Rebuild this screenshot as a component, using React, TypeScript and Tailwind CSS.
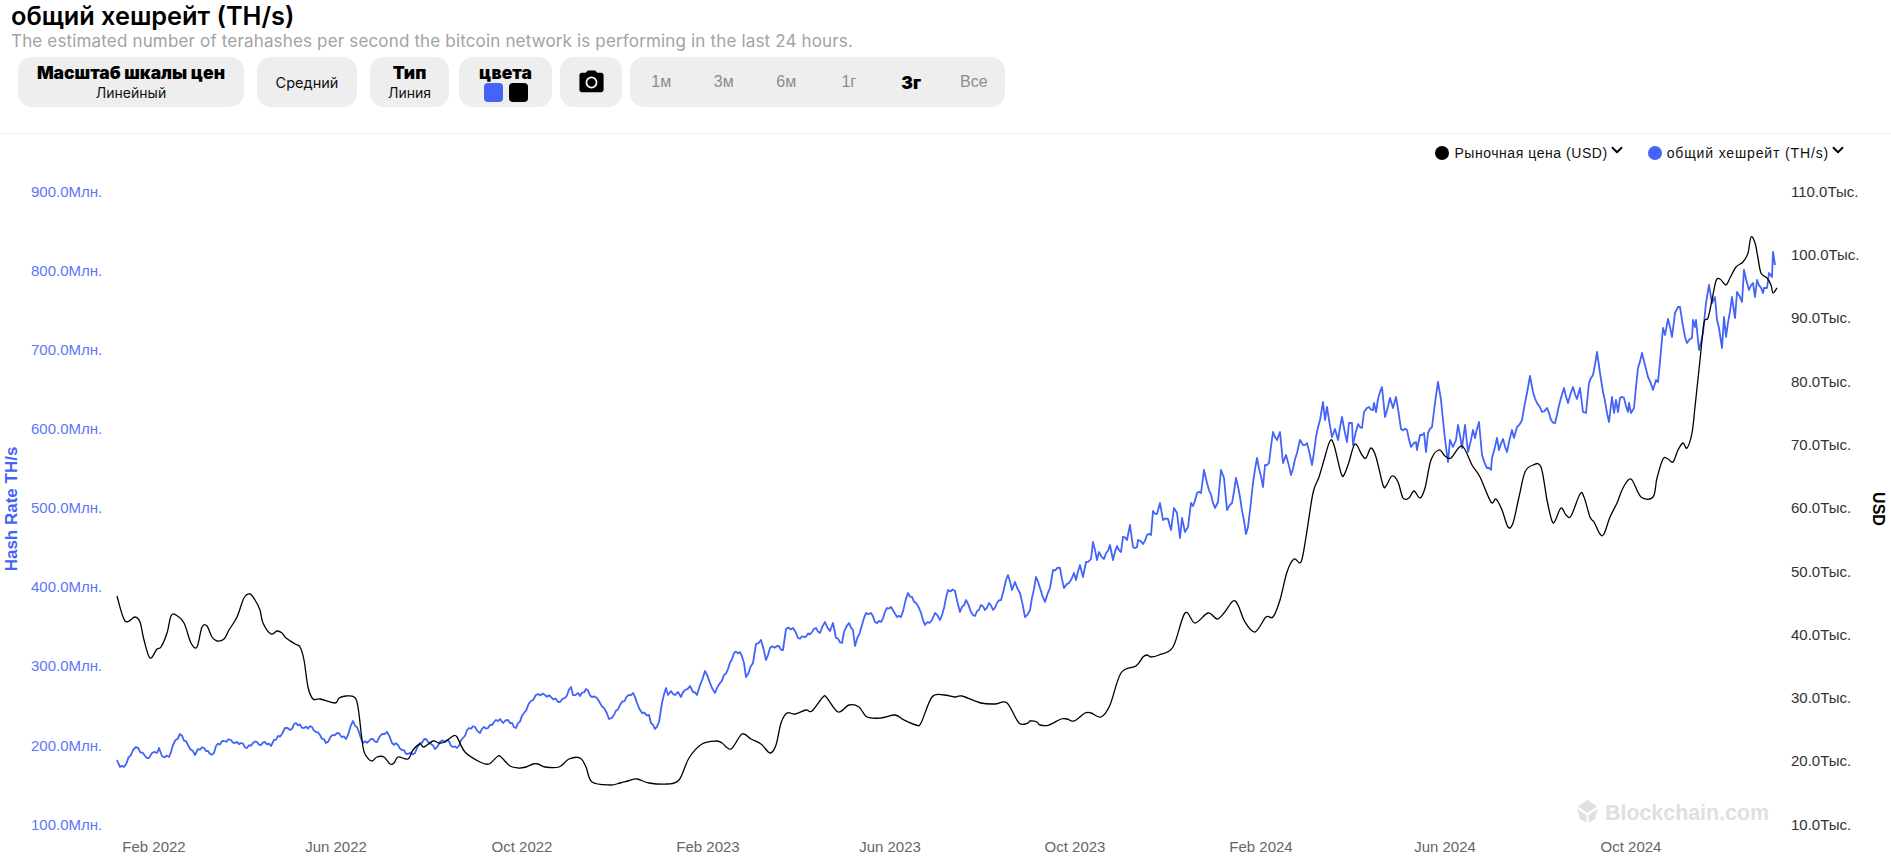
import { ChevronDown } from "lucide-react";

const priceLine =
  "117,596 125,621 135,617 140,622 144,640 150,658 157,649 161,647 167,633 171,616 176,615 184,623 191,643 197,647 202,627 207,626 212,637 217,641 224,639 229,630 237,617 244,598 250,594 255,600 260,610 263,623 271,634 277,631 282,633 286,638 295,644 300,647 304,660 308,687 313,699 320,699 335,703 339,698 346,696 354,697 358,707 363,747 367,757 372,761 377,757 384,757 390,764 394,763 398,757 408,759 413,750 420,744 424,747 433,741 439,743 445,742 453,736 457,737 465,752 480,762 489,764 498,756 502,758 510,766 518,768 526,767 533,764 538,764 545,767 559,767 569,759 580,758 586,767 592,782 610,785 620,783 628,781 637,779 649,783 667,784 679,780 689,758 702,744 716,741 722,743 731,749 742,734 751,739 761,744 770,753 776,745 781,723 787,713 795,714 806,710 812,711 823,697 827,698 838,712 849,705 859,707 867,717 881,718 895,715 904,720 916,725 921,723 932,697 944,695 955,697 962,696 981,703 995,704 1007,703 1019,723 1028,723 1030,721 1037,722 1040,725 1049,725 1061,719 1067,719 1074,721 1085,713 1091,713 1101,717 1110,705 1121,673 1136,666 1143,657 1147,655 1151,657 1159,655 1173,647 1185,613 1195,623 1208,613 1217,619 1224,613 1233,601 1238,605 1245,622 1255,632 1266,617 1273,617 1280,600 1287,572 1294,559 1301,562 1306,537 1313,493 1319,477 1324,460 1330,441 1334,445 1341,473 1344,475 1349,462 1355,444 1362,455 1366,458 1371,448 1376,457 1383,485 1386,486 1392,476 1398,482 1403,498 1409,498 1414,491 1420,498 1425,488 1431,460 1439,450 1445,456 1451,458 1462,446 1472,465 1480,477 1491,502 1496,499 1502,510 1508,527 1513,523 1519,497 1525,472 1533,465 1541,467 1547,500 1552,521 1555,521 1561,508 1566,515 1571,516 1580,494 1584,497 1590,517 1594,522 1600,534 1604,534 1610,517 1617,503 1623,488 1631,479 1641,497 1653,497 1657,478 1663,459 1668,459 1673,462 1678,450 1683,443 1687,448 1692,433 1695,407 1700,360 1704,323 1708,318 1712,300 1716,281 1720,279 1726,285 1730,278 1736,267 1743,262 1748,253 1751,237 1755,243 1758,258 1761,273 1767,278 1771,285 1773,293 1777,288";

const hashLine =
  "117,760 120,767 124,767 133,750 136,747 145,756 149,758 152,753 157,753 159,748 162,756 169,757 173,745 180,734 188,745 195,755 198,749 204,748 210,754 214,753 216,746 224,741 231,740 235,743 241,743 247,748 253,743 257,742 261,745 265,742 271,746 274,740 282,734 285,728 290,730 296,723 304,728 312,727 316,732 320,735 326,743 333,735 337,733 346,739 353,721 359,732 363,743 369,741 373,739 377,742 382,734 387,732 392,743 398,745 402,750 408,754 415,753 420,743 426,739 431,744 435,749 440,742 447,740 453,747 457,748 463,738 469,728 475,727 480,733 484,727 488,728 494,722 500,719 503,723 508,720 516,728 524,713 531,701 538,694 545,695 551,697 560,702 565,698 571,687 573,695 578,693 580,696 586,689 592,697 597,698 600,703 604,708 609,719 614,715 620,705 629,695 633,693 637,703 642,713 649,715 651,723 655,729 659,722 662,703 666,688 668,695 671,691 675,695 678,692 681,697 685,690 690,686 693,692 697,695 700,685 705,671 710,683 715,693 720,683 728,669 734,653 740,652 744,663 746,677 753,663 756,644 761,640 766,660 770,648 777,646 783,650 786,629 793,628 798,638 804,637 812,632 816,628 820,633 825,622 830,631 833,623 836,638 842,643 844,632 849,623 853,630 855,646 862,625 866,613 871,613 875,622 881,622 887,608 891,607 894,612 897,617 901,617 908,593 916,603 921,613 925,625 932,620 935,613 940,620 944,608 948,590 955,591 960,612 966,600 971,612 975,616 981,605 985,610 989,603 993,610 997,603 1001,600 1006,580 1008,575 1012,590 1015,582 1020,593 1025,617 1030,610 1036,577 1040,588 1045,602 1050,588 1053,570 1060,568 1064,588 1069,583 1074,573 1076,580 1080,565 1083,577 1086,562 1091,559 1093,542 1097,560 1099,552 1104,559 1110,545 1113,560 1117,546 1121,552 1123,537 1127,540 1130,525 1133,547 1137,547 1138,540 1143,544 1147,535 1151,535 1153,511 1157,514 1160,503 1163,520 1168,519 1171,530 1174,508 1177,513 1180,538 1182,518 1185,532 1188,527 1191,503 1193,506 1197,493 1201,493 1204,470 1207,483 1215,508 1218,502 1221,470 1224,478 1227,510 1232,503 1236,478 1240,497 1246,534 1248,527 1253,483 1257,458 1263,487 1265,465 1269,463 1273,432 1277,440 1280,432 1283,463 1286,455 1291,475 1297,453 1300,440 1303,445 1307,443 1312,465 1316,437 1320,420 1323,402 1325,420 1327,407 1332,437 1335,429 1338,440 1342,417 1347,442 1349,423 1352,423 1353,445 1358,424 1362,428 1364,412 1369,407 1373,410 1374,403 1376,412 1378,399 1382,387 1385,417 1390,398 1393,408 1396,397 1401,429 1407,430 1411,447 1416,442 1417,450 1420,435 1424,433 1426,452 1428,433 1432,427 1435,403 1438,382 1441,400 1444,430 1448,462 1450,440 1453,447 1456,440 1458,425 1462,448 1465,425 1468,452 1473,430 1475,438 1479,422 1482,455 1487,468 1491,470 1492,458 1497,438 1499,450 1503,439 1507,452 1512,430 1514,438 1517,427 1522,420 1527,393 1530,376 1533,392 1537,403 1542,412 1547,408 1551,420 1555,423 1557,415 1561,398 1564,388 1568,403 1573,387 1577,399 1580,388 1583,412 1586,413 1589,383 1593,375 1597,352 1600,373 1603,392 1609,422 1612,397 1614,413 1616,400 1618,412 1620,398 1624,398 1628,412 1629,403 1631,413 1634,408 1638,368 1642,353 1645,365 1648,377 1653,390 1656,380 1658,382 1663,328 1665,335 1668,319 1672,337 1675,313 1678,307 1680,307 1685,337 1687,343 1692,338 1693,320 1695,327 1696,320 1699,350 1703,333 1706,303 1709,285 1712,303 1715,297 1717,320 1719,328 1722,348 1724,317 1726,337 1732,297 1735,318 1737,292 1742,302 1744,270 1749,290 1753,283 1755,297 1757,280 1763,293 1764,288 1767,288 1769,273 1772,277 1773,252 1775,265";

const parsePoints = (line: string) =>
  line.split(" ").map((p) => p.split(",").map(Number) as [number, number]);

// catmull-rom through the traced points, the price line is smooth in the original
function smoothPath(line: string) {
  const pts = parsePoints(line);
  let d = `M${pts[0][0]} ${pts[0][1]}`;
  for (let i = 0; i < pts.length - 1; i++) {
    const p0 = pts[Math.max(i - 1, 0)];
    const p1 = pts[i];
    const p2 = pts[i + 1];
    const p3 = pts[Math.min(i + 2, pts.length - 1)];
    const c1x = p1[0] + (p2[0] - p0[0]) / 6;
    const c1y = p1[1] + (p2[1] - p0[1]) / 6;
    const c2x = p2[0] - (p3[0] - p1[0]) / 6;
    const c2y = p2[1] - (p3[1] - p1[1]) / 6;
    d += ` C${c1x.toFixed(1)} ${c1y.toFixed(1)} ${c2x.toFixed(1)} ${c2y.toFixed(1)} ${p2[0]} ${p2[1]}`;
  }
  return d;
}

// the hash rate line is daily data, fill the long segments with small spikes
function dailyPoints(line: string) {
  const pts = parsePoints(line);
  const out: string[] = [];
  let flip = 1;
  pts.forEach((p, i) => {
    out.push(`${p[0]},${p[1]}`);
    const next = pts[i + 1];
    if (!next) return;
    const steps = Math.floor((next[0] - p[0]) / 2);
    for (let s = 1; s < steps; s++) {
      const t = s / steps;
      flip = -flip;
      out.push(`${p[0] + (next[0] - p[0]) * t},${p[1] + (next[1] - p[1]) * t + flip * 1.1}`);
    }
  });
  return out.join(" ");
}

const leftTicks = [
  ["900.0Млн.", 192],
  ["800.0Млн.", 271],
  ["700.0Млн.", 350],
  ["600.0Млн.", 429],
  ["500.0Млн.", 508],
  ["400.0Млн.", 587],
  ["300.0Млн.", 666],
  ["200.0Млн.", 746],
  ["100.0Млн.", 825],
] as const;

const rightTicks = [
  ["110.0Тыс.", 192],
  ["100.0Тыс.", 255],
  ["90.0Тыс.", 318],
  ["80.0Тыс.", 382],
  ["70.0Тыс.", 445],
  ["60.0Тыс.", 508],
  ["50.0Тыс.", 572],
  ["40.0Тыс.", 635],
  ["30.0Тыс.", 698],
  ["20.0Тыс.", 761],
  ["10.0Тыс.", 825],
] as const;

const dateTicks = [
  ["Feb 2022", 154],
  ["Jun 2022", 336],
  ["Oct 2022", 522],
  ["Feb 2023", 708],
  ["Jun 2023", 890],
  ["Oct 2023", 1075],
  ["Feb 2024", 1261],
  ["Jun 2024", 1445],
  ["Oct 2024", 1631],
] as const;

const ranges = ["1м", "3м", "6м", "1г", "3г", "Все"];

function ControlTitle({ children }: { children: string }) {
  return <div className="text-[17.5px] leading-[20px] font-black text-black">{children}</div>;
}

function LegendItem({ color, label, spacing }: { color: string; label: string; spacing: string }) {
  return (
    <div className="flex items-center">
      <span className={`mr-[5px] h-[14px] w-[14px] rounded-full ${color}`} />
      <span className={`text-[14px] leading-[20px] text-[#111] ${spacing}`}>{label}</span>
      <ChevronDown className="mb-[6px] h-[18px] w-[18px]" strokeWidth={2.5} color="#000" />
    </div>
  );
}

function Chart() {
  return (
    <svg
      viewBox="0 172 1891 690"
      width={1891}
      height={690}
      className="block font-['Liberation_Sans',sans-serif] text-[15px]"
    >
      {leftTicks.map(([label, y]) => (
        <text key={label} x={31} y={y + 5} fill="#5c76f7">
          {label}
        </text>
      ))}
      {rightTicks.map(([label, y]) => (
        <text key={label} x={1791} y={y + 5} fill="#333">
          {label}
        </text>
      ))}
      {dateTicks.map(([label, x]) => (
        <text key={label} x={x} y={852} fill="#666" textAnchor="middle">
          {label}
        </text>
      ))}
      <text
        transform="translate(17 509) rotate(-90)"
        textAnchor="middle"
        fill="#4364f7"
        fontSize={17}
        fontWeight={700}
      >
        Hash Rate TH/s
      </text>
      <text
        transform="translate(1873 509) rotate(90)"
        textAnchor="middle"
        fill="#000"
        fontSize={16}
        fontWeight={700}
      >
        USD
      </text>

      {/* watermark */}
      <g fill="#e0e0e0">
        <polygon points="1587.5,800 1597,806.5 1587.5,813 1578,806.5" />
        <polygon points="1577,808.5 1586.5,815 1586.5,822.5 1580,819" />
        <polygon points="1598,808.5 1588.5,815 1588.5,822.5 1595,819" />
        <text x={1605} y={820} fontSize={21.4} fontWeight={700}>
          Blockchain.com
        </text>
      </g>

      <polyline
        points={dailyPoints(hashLine)}
        fill="none"
        stroke="#4364f7"
        strokeWidth={1.8}
        strokeLinejoin="round"
      />
      <path d={smoothPath(priceLine)} fill="none" stroke="#000" strokeWidth={1.3} />
    </svg>
  );
}

export default function App() {
  return (
    <div className="h-[863px] w-[1891px] overflow-hidden bg-white font-['Inter',sans-serif]">
      <div className="h-[134px] border-b border-[#eeeeee] pl-[11px]">
        <h1 className="pt-[1px] text-[25.3px] leading-[30px] font-semibold text-black">
          общий хешрейт (TH/s)
        </h1>
        <p className="text-[17px] leading-[20px] tracking-[0.16px] text-[#a3a3a3]">
          The estimated number of terahashes per second the bitcoin network is performing in the last 24 hours.
        </p>
        <div className="mt-[6px] ml-[7px] flex items-center">
          <div className="flex h-[50px] w-[226px] flex-col items-center justify-center rounded-[14px] bg-[#eeeeee] pt-[1px]">
            <ControlTitle>Масштаб шкалы цен</ControlTitle>
            <div className="text-[14px] leading-[19px] text-[#111]">Линейный</div>
          </div>
          <div className="ml-[13px] flex h-[50px] w-[100px] items-center justify-center rounded-[14px] bg-[#eeeeee] pt-[1px] text-[14.5px] text-[#111]">
            Средний
          </div>
          <div className="ml-[13px] flex h-[50px] w-[79px] flex-col items-center justify-center rounded-[14px] bg-[#eeeeee] pt-[1px]">
            <ControlTitle>Тип</ControlTitle>
            <div className="text-[14px] leading-[19px] text-[#111]">Линия</div>
          </div>
          <div className="ml-[10px] flex h-[50px] w-[93px] flex-col items-center justify-center rounded-[14px] bg-[#eeeeee]">
            <ControlTitle>цвета</ControlTitle>
            <div className="flex gap-[6px]">
              <span className="h-[19px] w-[19px] rounded-[4px] bg-[#4364f7]" />
              <span className="h-[19px] w-[19px] rounded-[4px] bg-black" />
            </div>
          </div>
          <div className="ml-[8px] flex h-[50px] w-[62px] items-center justify-center rounded-[14px] bg-[#eeeeee]">
            <svg viewBox="0 0 24 24" width={29} height={29}>
              <path d="M9 2L7.17 4H4c-1.1 0-2 .9-2 2v12c0 1.1.9 2 2 2h16c1.1 0 2-.9 2-2V6c0-1.1-.9-2-2-2h-3.17L15 2H9z" />
              <circle cx={12} cy={12} r={4.2} fill="none" stroke="#fff" strokeWidth={1.4} />
            </svg>
          </div>
          <div className="ml-[8px] grid h-[50px] w-[375px] grid-cols-6 items-center rounded-[14px] bg-[#eeeeee] text-center">
            {ranges.map((range) =>
              range === "3г" ? (
                <span key={range} className="pt-[2px] text-[17.5px] font-black text-black">
                  {range}
                </span>
              ) : (
                <span key={range} className="font-['Liberation_Sans',sans-serif] text-[16px] text-[#8c8c8c]">
                  {range}
                </span>
              )
            )}
          </div>
        </div>
      </div>
      <div className="flex h-[38px] items-center justify-end gap-[22px] pr-[44px] font-['Liberation_Sans',sans-serif]">
        <LegendItem color="bg-black" label="Рыночная цена (USD)" spacing="tracking-[0.55px]" />
        <LegendItem color="bg-[#4364f7]" label="общий хешрейт (TH/s)" spacing="tracking-[0.85px]" />
      </div>
      <Chart />
    </div>
  );
}
